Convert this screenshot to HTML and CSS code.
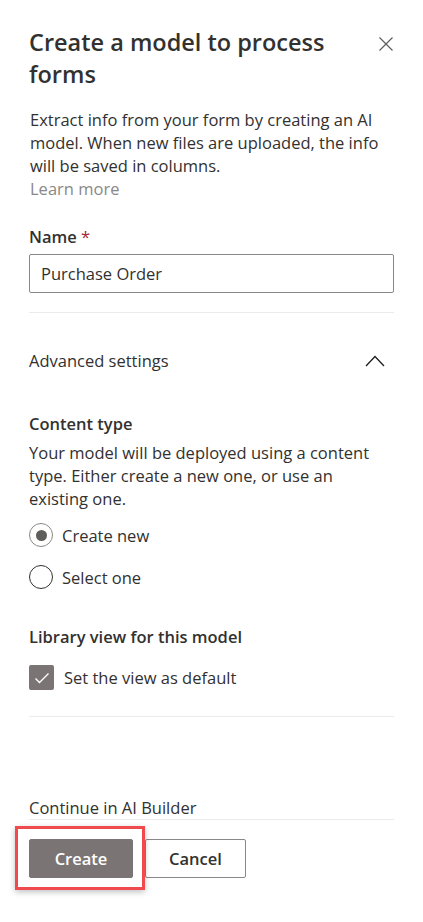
FILE: index.html
```html
<!DOCTYPE html>
<html lang="en">
<head>
<meta charset="utf-8">
<title>Create a model to process forms</title>
<link rel="stylesheet" href="styles.css">
</head>
<body>
<div class="panel">
  <div class="header">
    <h1 class="title">Create a model to process forms</h1>
    <button class="close" aria-label="Close">
      <svg width="14" height="14" viewBox="0 0 14 14"><path d="M0.5 0.5 L13.5 13.5 M13.5 0.5 L0.5 13.5" stroke="#605e5c" stroke-width="1.2" fill="none"/></svg>
    </button>
  </div>
  <p class="desc">Extract info from your form by creating an AI model. When new files are uploaded, the info will be saved in columns. <a class="learn" href="#">Learn more</a></p>

  <label class="label name-label">Name <span class="req">*</span></label>
  <div class="input">Purchase Order</div>

  <div class="divider first"></div>

  <div class="adv">
    <span>Advanced settings</span>
    <svg width="20" height="12" viewBox="0 0 20 12"><path d="M1 11 L10 1.5 L19 11" stroke="#201f1e" stroke-width="1.3" fill="none"/></svg>
  </div>

  <div class="label ct-label">Content type</div>
  <p class="ct-desc">Your model will be deployed using a content type. Either create a new one, or use an existing one.</p>

  <div class="radios">
    <div class="radio-row"><span class="radio checked"></span><span>Create new</span></div>
    <div class="radio-row"><span class="radio"></span><span>Select one</span></div>
  </div>

  <div class="label lib-label">Library view for this model</div>
  <div class="check-row">
    <span class="checkbox"><svg width="16" height="12" viewBox="0 0 16 12"><path d="M1.5 6.5 L5.5 10.5 L14.5 1.5" stroke="#fff" stroke-width="1.4" fill="none"/></svg></span>
    <span>Set the view as default</span>
  </div>

  <div class="divider second"></div>

  <div class="continue">Continue in AI Builder</div>

  <div class="buttons">
    <span class="highlight"><button class="btn primary">Create</button></span>
    <button class="btn secondary">Cancel</button>
  </div>
</div>
</body>
</html>
```
FILE: styles.css
```css
* { box-sizing: border-box; }
html, body { margin: 0; padding: 0; background: #fff; }
body {
  font-family: "Open Sans", "Noto Sans", sans-serif;
  color: #323130;
  font-size: 16.5px;
  line-height: 23px;
}
.panel {
  padding: 26px 29px 44px 29px;
  display: flex;
  flex-direction: column;
}
.header {
  display: flex;
  justify-content: space-between;
  align-items: flex-start;
}
.title {
  margin: 0;
  font-size: 23.5px;
  line-height: 32px;
  font-weight: 600;
  width: 320px;
  color: #323130;
}
.close {
  border: 0;
  background: none;
  padding: 0;
  margin: 10px 0 0 0;
  width: 16px;
  height: 16px;
  display: flex;
  align-items: center;
  justify-content: center;
}
.desc {
  margin: 18px 0 0 0;
  padding: 0 10px 0 1px;
}
.learn {
  display: block;
  color: #8a8886;
  text-decoration: none;
}
.label {
  display: block;
  font-weight: 600;
  color: #323130;
}
.name-label { margin-top: 25px; }
.req { color: #a4262c; font-weight: 400; }
.input {
  margin-top: 6px;
  height: 39px;
  border: 1px solid #8a8886;
  border-radius: 2px;
  padding: 0 11px;
  display: flex;
  align-items: center;
}
.divider {
  height: 1px;
  background: #edebe9;
}
.divider.first { margin-top: 19px; }
.adv {
  margin-top: 36px;
  display: flex;
  justify-content: space-between;
  align-items: center;
  padding-right: 9px;
}
.ct-label { margin-top: 40px; }
.ct-desc { margin: 6px 0 0 0; padding-right: 10px; }
.radios {
  margin-top: 13px;
  display: flex;
  flex-direction: column;
  gap: 18px;
}
.radio-row {
  display: flex;
  align-items: center;
  gap: 9px;
  height: 24px;
}
.radio {
  width: 24px;
  height: 24px;
  border-radius: 50%;
  border: 1.5px solid #323130;
  flex: none;
  display: flex;
  align-items: center;
  justify-content: center;
}
.radio.checked { border-color: #8a8886; }
.radio.checked::after {
  content: "";
  width: 11px;
  height: 11px;
  border-radius: 50%;
  background: #605e5c;
}
.lib-label { margin-top: 36px; }
.check-row {
  margin-top: 17px;
  display: flex;
  align-items: center;
  gap: 10px;
  height: 25px;
}
.checkbox {
  width: 25px;
  height: 25px;
  border-radius: 2px;
  background: #7a7574;
  display: flex;
  align-items: center;
  justify-content: center;
  flex: none;
}
.divider.second { margin-top: 26px; }
.continue {
  margin-top: 79px;
  border-bottom: 1px solid #edebe9;
}
.buttons {
  margin-top: 19px;
  display: flex;
  gap: 12px;
}
.highlight {
  position: relative;
  display: flex;
}
.highlight::after {
  content: "";
  position: absolute;
  left: -14px;
  top: -13px;
  right: -12px;
  bottom: -12px;
  border: 3px solid #f04a4f;
  box-shadow: 0 2px 6px rgba(0,0,0,0.25);
  pointer-events: none;
}
.btn {
  height: 39px;
  border-radius: 2px;
  font-family: inherit;
  font-size: 16.5px;
  font-weight: 600;
  padding: 0;
}
.primary {
  width: 104px;
  background: #7a7574;
  color: #fff;
  border: 1px solid #7a7574;
}
.secondary {
  width: 101px;
  background: #fff;
  color: #323130;
  border: 1px solid #8a8886;
}
```
